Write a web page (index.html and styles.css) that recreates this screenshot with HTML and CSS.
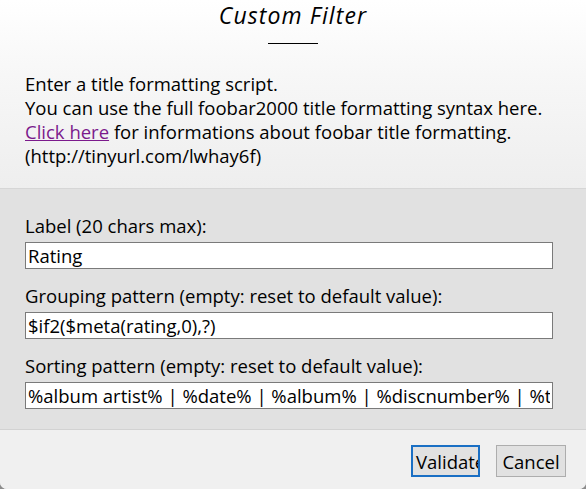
FILE: index.html
```html
<!DOCTYPE html>
<html lang="en">
<head>
<meta charset="utf-8">
<title>Custom Filter</title>
<link rel="stylesheet" href="styles.css">
</head>
<body>
<div class="dialog">
  <header class="header">
    <h1 class="title">Custom Filter</h1>
    <div class="separator"></div>
    <p class="intro">
      Enter a title formatting script.<br>
      You can use the full foobar2000 title formatting syntax here.<br>
      <a class="link" href="#">Click here</a> for informations about foobar title formatting.<br>
      (http://tinyurl.com/lwhay6f)
    </p>
  </header>
  <main class="form">
    <div class="field">
      <label class="field-label">Label (20 chars max):</label>
      <input class="field-input" type="text" value="Rating">
    </div>
    <div class="field">
      <label class="field-label">Grouping pattern (empty: reset to default value):</label>
      <input class="field-input" type="text" value="$if2($meta(rating,0),?)">
    </div>
    <div class="field">
      <label class="field-label">Sorting pattern (empty: reset to default value):</label>
      <input class="field-input" type="text" value="%album artist% | %date% | %album% | %discnumber% | %tracknumber% | %title%">
    </div>
  </main>
  <footer class="footer">
    <button class="btn btn-primary">Validate</button>
    <button class="btn">Cancel</button>
  </footer>
</div>
</body>
</html>
```

FILE: styles.css
```css
html {
  background: #8c8c8c;
}
body {
  margin: 0;
  width: 586px;
  height: 489px;
  font-family: "Open Sans", "Noto Sans", "Liberation Sans", sans-serif;
  font-size: 18.5px;
  color: #000;
}
.dialog {
  width: 586px;
  height: 489px;
  display: flex;
  flex-direction: column;
  overflow: hidden;
  border-bottom-left-radius: 7px;
  border-bottom-right-radius: 7px;
  background: #f0f0f0;
}
.header {
  display: flex;
  flex-direction: column;
  align-items: center;
  padding-bottom: 20px;
  background: linear-gradient(to bottom, #ffffff 0%, #f7f7f7 40%, #eeeeee 100%);
  border-bottom: 1px solid #d6d6d6;
}
.title {
  margin: 0;
  font-size: 23px;
  line-height: 31px;
  font-weight: normal;
  font-style: italic;
  letter-spacing: 1.1px;
}
.separator {
  width: 50px;
  height: 1px;
  margin-top: 12px;
  background: #000;
}
.intro {
  align-self: stretch;
  margin: 28px 0 0;
  padding-left: 25px;
  line-height: 24px;
}
.link {
  color: #7b1a8c;
  text-decoration: underline;
}
.form {
  flex: none;
  display: flex;
  flex-direction: column;
  gap: 15px;
  padding: 25px 33px 20px 25px;
  background: #e1e1e1;
}
.field {
  display: flex;
  flex-direction: column;
  gap: 4px;
}
.field-label {
  line-height: 24px;
}
.field-input {
  box-sizing: border-box;
  height: 27px;
  margin: 0;
  padding: 0 2px;
  border: 1px solid #7a7a7a;
  background: #fff;
  font: inherit;
  color: #000;
  outline: none;
}
.footer {
  flex: 1;
  display: flex;
  justify-content: flex-end;
  align-items: flex-start;
  gap: 16px;
  padding: 15px 20px 0 0;
  border-top: 1px solid #d2d2d2;
  background: #f0f0f0;
}
.btn {
  box-sizing: border-box;
  width: 70px;
  height: 32px;
  margin: 0;
  padding: 0 4px;
  border: 1px solid #adadad;
  background: #e1e1e1;
  font: inherit;
  color: #000;
  white-space: nowrap;
  overflow: hidden;
  text-align: center;
}
.btn-primary {
  width: 69px;
  border: 2px solid #1a6fc4;
  text-align: left;
  padding-left: 3px;
}
```
